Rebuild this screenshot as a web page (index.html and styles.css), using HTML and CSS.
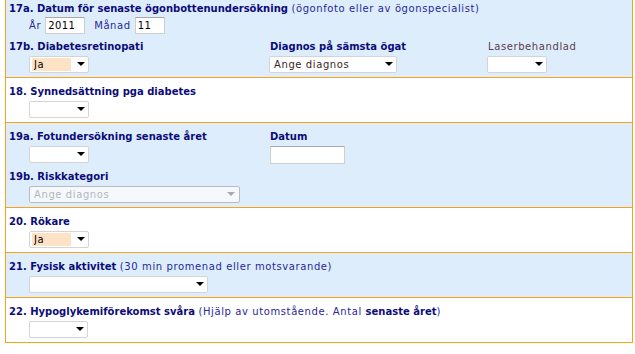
FILE: index.html
```html
<!DOCTYPE html>
<html lang="sv">
<head>
    <meta charset="UTF-8">
    <title>Diabetesregister - kontroll</title>
    <link rel="stylesheet" href="styles.css">
</head>
<body>
<div class="form">

    <!-- 17 -->
    <div class="row blue">
        <div class="label">17a. Datum för senaste ögonbottenundersökning <span class="note">(ögonfoto eller av ögonspecialist)</span></div>
        <div class="date-line">
            <span class="small">År</span><input class="txt year" type="text" value="2011">
            <span class="small">Månad</span><input class="txt month" type="text" value="11">
        </div>
        <div class="cols">
            <div>
                <div class="label">17b. Diabetesretinopati</div>
                <span class="dd"><select class="sel w60 ja"><option>Ja</option></select></span>
            </div>
            <div>
                <div class="label">Diagnos på sämsta ögat</div>
                <span class="dd flush"><select class="sel w128 brown"><option>Ange diagnos</option></select></span>
            </div>
            <div>
                <div class="label plain">Laserbehandlad</div>
                <span class="dd flush"><select class="sel w60"><option></option></select></span>
            </div>
        </div>
    </div>

    <!-- 18 -->
    <div class="row">
        <div class="label">18. Synnedsättning pga diabetes</div>
        <span class="dd"><select class="sel w60"><option></option></select></span>
    </div>

    <!-- 19 -->
    <div class="row blue">
        <div class="cols">
            <div>
                <div class="label">19a. Fotundersökning senaste året</div>
                <span class="dd"><select class="sel w60"><option></option></select></span>
            </div>
            <div>
                <div class="label">Datum</div>
                <input class="txt datum" type="text" value="">
            </div>
        </div>
        <div class="label gap">19b. Riskkategori</div>
        <span class="dd off"><select class="sel w211" disabled><option>Ange diagnos</option></select></span>
    </div>

    <!-- 20 -->
    <div class="row">
        <div class="label">20. Rökare</div>
        <span class="dd"><select class="sel w60 ja"><option>Ja</option></select></span>
    </div>

    <!-- 21 -->
    <div class="row blue">
        <div class="label">21. Fysisk aktivitet <span class="note">(30 min promenad eller motsvarande)</span></div>
        <span class="dd"><select class="sel w179"><option></option></select></span>
    </div>

    <!-- 22 -->
    <div class="row">
        <div class="label">22. Hypoglykemiförekomst svåra <span class="note">(Hjälp av utomstående. Antal <b>senaste året</b>)</span></div>
        <span class="dd"><select class="sel w59"><option></option></select></span>
    </div>

</div>
</body>
</html>
```

FILE: styles.css
```css
*{
    margin: 0;
    padding: 0;
    box-sizing: border-box;
}
html,body{
    background-color: #fff;
}
body{
    font-family: "DejaVu Sans", Verdana, sans-serif;
    font-size: 10px;
    color: #000;
}

.form{
    width: 628px;
    margin: -6px 0 0 5px;
    border: 1px solid #f7a21b;
    border-bottom: 0;
}

.row{
    border-bottom: 1px solid #f7a21b;
    padding: 7px 3px 4px 3px;
}
.row.blue{
    background-color: #deedfc;
}

.label{
    line-height: 14px;
    height: 14px;
    font-weight: bold;
    color: #0c0c78;
    white-space: nowrap;
}
.label.plain{
    font-weight: normal;
    color: #5c3c4c;
    letter-spacing: 0.6px;
}
.label.gap{
    margin-top: 6px;
}
.note{
    font-weight: normal;
    color: #28289a;
    letter-spacing: 0.6px;
}
.note b{
    color: #0c0c78;
    letter-spacing: 0;
}

.date-line{
    display: flex;
    align-items: center;
    margin: 1px 0 6px 20px;
    height: 17px;
}
.small{
    color: #28289a;
    font-size: 10px;
    letter-spacing: 0.6px;
    margin-right: 4px;
}
.date-line .year{
    margin-right: 9px;
}

.cols{
    display: grid;
    grid-template-columns: 261px 218px 1fr;
}

.txt{
    height: 17px;
    border: 1px solid #cfcfcf;
    border-top-color: #a9a9a9;
    background: #fff;
    font-family: inherit;
    font-size: 10px;
    letter-spacing: 0.4px;
    padding: 0 2px;
    outline: none;
}
.year{ width: 40px; }
.month{ width: 30px; }
.datum{
    width: 75px;
    margin-top: 2px;
    height: 18px;
}

.dd{
    display: inline-block;
    position: relative;
    margin: 2px 0 0 20px;
    height: 17px;
    vertical-align: top;
}
.dd.flush{
    margin-left: -1px;
}
.dd::after{
    content: "";
    position: absolute;
    top: 6px;
    right: 4px;
    border-left: 4px solid transparent;
    border-right: 4px solid transparent;
    border-top: 4px solid #000;
    pointer-events: none;
}
.dd.off::after{
    border-top-color: #a8a8a8;
    right: 5px;
}

.sel{
    -webkit-appearance: none;
    appearance: none;
    display: block;
    height: 17px;
    border: 1px solid #d4d4d4;
    border-radius: 2px;
    background-color: #fff;
    font-family: inherit;
    font-size: 10px;
    letter-spacing: 0.6px;
    color: #000;
    padding: 0 14px 0 4px;
    line-height: 15px;
    outline: none;
}
.sel.ja{
    background-image: linear-gradient(#fde2c6, #fde2c6);
    background-repeat: no-repeat;
    background-position: 2px 1px;
    background-size: 39px 13px;
}
.sel.brown{
    color: #3a2626;
}
.sel:disabled{
    border-color: #a8a8a8;
    color: #a0a0a0;
    background-color: #fff;
}

.w59{ width: 59px; }
.w60{ width: 60px; }
.w128{ width: 128px; }
.w179{ width: 179px; }
.w211{ width: 211px; }
```
